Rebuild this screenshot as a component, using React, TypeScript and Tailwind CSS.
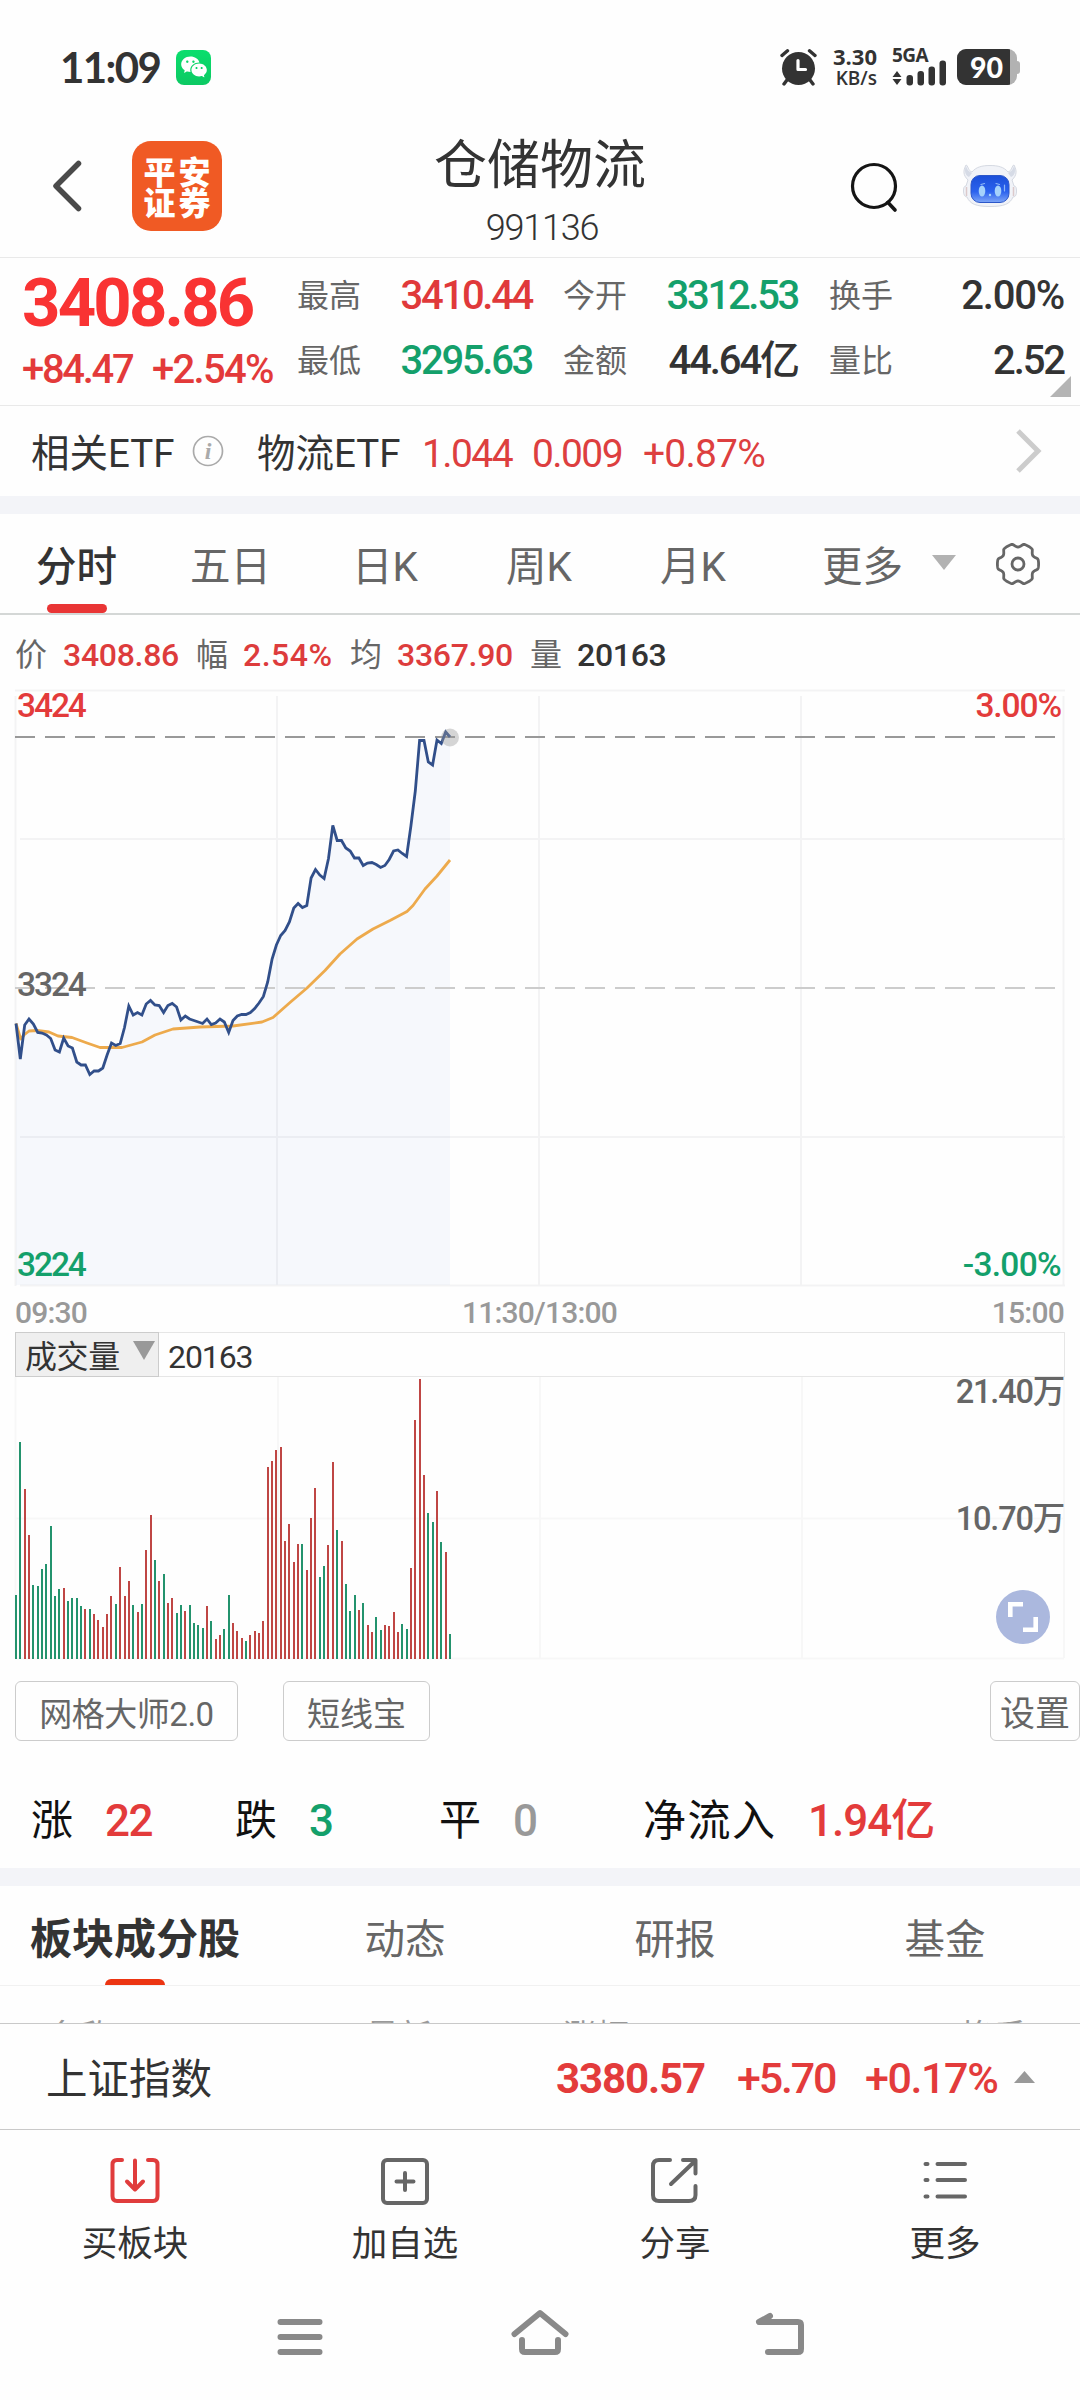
import type { ReactNode } from 'react'
import { RiWechatFill } from 'react-icons/ri'

const RED = '#e33b3b'
const GREEN = '#14a06b'

const QUOTES = [
    [
        { label: '最高', value: '3410.44', color: 'text-[#e0393a] tracking-[-2.3px]' },
        { label: '最低', value: '3295.63', color: 'text-[#14a06b] tracking-[-2.3px]' },
    ],
    [
        { label: '今开', value: '3312.53', color: 'text-[#14a06b] tracking-[-2.3px]' },
        { label: '金额', value: '44.64亿', color: 'text-[#333] tracking-[-2.1px]' },
    ],
    [
        { label: '换手', value: '2.00%', color: 'text-[#333] tracking-[-1.2px]' },
        { label: '量比', value: '2.52', color: 'text-[#333] tracking-[-2.1px]' },
    ],
]

const PERIODS = [
    { label: '分时', width: 'w-[154px]', active: true },
    { label: '五日', width: 'w-[162px]' },
    { label: '日K', width: 'w-[154px]' },
    { label: '周K', width: 'w-[154px]' },
    { label: '月K', width: 'w-[153px]' },
]

const SECTION_TABS = ['动态', '研报', '基金']

// minute by minute, pixels below the top grid line
const PRICE = [
    333.5, 369, 335, 329, 334, 342.5, 343, 345, 348.5, 360, 362, 348, 356, 358, 372, 375, 375, 384.5, 381, 381,
    378, 365, 353, 355.5, 353.5, 337.5, 316, 325, 322.5, 325, 314, 310.5, 315, 315.5, 322.5, 315.5, 313.5, 317, 330, 326,
    329, 330.5, 332, 333.5, 329, 334.5, 333, 329, 332, 342.5, 330.5, 326, 324.5, 324.5, 322.5, 318.5, 313, 306.5, 292, 269,
    255, 245.5, 240.5, 232, 218, 213.5, 217.5, 215.5, 188, 179.5, 185, 188.5, 168.5, 135.5, 150.5, 150.5, 158, 161, 168, 168,
    175.5, 173, 172.5, 174.5, 177.5, 175.5, 169.5, 161, 160, 163.5, 166.5, 136, 101, 50.5, 50.5, 72, 75, 50, 53.5, 42,
    47,
]

const AVERAGE =
    '16,333.5 20.7,349 24,345 29,341 37,340.5 49,342 58,346 72,347.5 87,353 100,357.5 122,357.5 142,352 155,345 173,339 200,337 233,336 262,332 273,327.5 290,312.5 307,298 325,280.5 340,264 357,249 373,239 390,230.5 407,221.5 413,215.5 425,199 437,186 450,170'

// positive = up minute, negative = down minute
const VOLUME = [
    -64, -217, 170, 124, -74, -73, -90, -95, -133, -63, -70, 71, -58, -61, -61, -53, 50, -50, 45, 39,
    32, 45, 63, -55, 92, 63, 78, -54, 47, -55, 109, 144, -99, 78, -85, 56, 61, -46, -54, 48,
    -54, -36, -34, -31, 53, -38, 20, 24, -30, -64, 36, 28, 21, -18, 24, 28, 26, 38, 192, 198,
    209, 212, 118, 135, 97, 115, -115, 89, 141, 171, -82, -93, 114, 197, -129, 118, -75, -48, -64, 49,
    -56, 34, 27, -42, -29, 34, 33, 47, 27, -35, -30, 91, 239, 280, 184, -146, -137, 168, -117, 107,
    -25,
]

const STEP = 4.34
const pricePoints = PRICE.map((y, i) => `${(16 + i * STEP).toFixed(1)},${y}`).join(' ')

// six flat teeth with rounded notches between them
const gearPath =
    Array.from({ length: 120 }, (_, i) => {
        const deg = i * 3
        const fromTooth = Math.abs(((deg + 30) % 60) - 30)
        const r = fromTooth <= 14 ? 20.6 : 20.6 - 3.6 * Math.sin((((fromTooth - 14) / 16) * Math.PI) / 2)
        const a = (deg * Math.PI) / 180
        return `${i ? 'L' : 'M'}${(22 + r * Math.cos(a)).toFixed(2)} ${(22 + r * Math.sin(a)).toFixed(2)}`
    }).join('') + 'Z'

function StatusBar() {
    return (
        <div className="flex h-[115px] items-center pt-[19px] pl-[60px] text-[#333]">
            <span className="w-[116px] font-[Lato] text-[42px] leading-none font-bold tracking-[-1.6px]">11:09</span>
            <div className="flex size-[35px] items-center justify-center rounded-lg bg-gradient-to-b from-[#0ade6d] to-[#0cc963] text-white">
                <RiWechatFill size={28} />
            </div>
            <svg className="ml-[569px]" width="37" height="37" viewBox="0 0 37 37" fill="none">
                <circle cx="18.5" cy="19.5" r="16.5" fill="#333" />
                <path d="M2 6.5L7.5 1.8M35 6.5L29.5 1.8" stroke="#333" strokeWidth="3.4" strokeLinecap="round" />
                <path d="M7 31L4 35M30 31L33 35" stroke="#333" strokeWidth="3.4" strokeLinecap="round" />
                <path d="M18 11.5V20.5H25.5" stroke="#fff" strokeWidth="3.2" strokeLinecap="round" strokeLinejoin="round" />
            </svg>
            <div className="ml-[12px] flex w-[48px] flex-col items-end font-['Open_Sans'] text-[22px] leading-[22px] font-bold">
                <span>3.30</span>
                <span className="text-[19px] font-semibold">KB/s</span>
            </div>
            <div className="ml-[15px] w-[56px]">
                <div className="font-['Open_Sans'] text-[19px] leading-[14px] font-bold tracking-[-0.5px]">5GA</div>
                <svg className="-mt-[2px] -ml-px block" width="57" height="26" viewBox="0 0 57 26" fill="#333">
                    <path d="M6 11L10.5 17H1.5ZM6 25L10.5 19H1.5Z" />
                    <rect x="15.5" y="15" width="6.5" height="10.5" rx="3" />
                    <rect x="26.5" y="11" width="6.5" height="14.5" rx="3" />
                    <rect x="37.5" y="6.5" width="6.5" height="19" rx="3" />
                    <rect x="48.5" y="0.5" width="6.5" height="25" rx="3" />
                </svg>
            </div>
            <div className="ml-[9px] flex items-center">
                <div className="flex h-9 w-[60px] overflow-hidden rounded-[9px] bg-[#b2b2b2]">
                    <div className="w-[53px] bg-[#333] pt-[3px] pl-[6px] text-center font-[Lato] text-[28.5px] leading-[31px] font-black text-white">90</div>
                </div>
                <div className="h-[13px] w-[3px] rounded-r-sm bg-[#b2b2b2]" />
            </div>
        </div>
    )
}

function Robot() {
    return (
        <svg width="56" height="46" viewBox="0 0 56 46" fill="none">
            <defs>
                <linearGradient id="face" x1="0" y1="0" x2="0" y2="1">
                    <stop offset="0" stopColor="#1b4fd8" />
                    <stop offset="0.6" stopColor="#2b62ee" />
                    <stop offset="1" stopColor="#7ea6f7" />
                </linearGradient>
            </defs>
            <path
                d="M4 2C1 8 1 12 6 17L4 23C2 23 1.5 25 1.5 28S2.5 34 5 34C8 41 14 43.5 28 43.5S48 41 51 34C54 34 54.5 31 54.5 28S54 23 52 23L50 17C55 12 55 8 52 2C50 2 50 8 46 9C42 4 36 2.5 28 2.5S14 4 10 9C6 8 6 2 4 2Z"
                fill="#f1f3f8"
                stroke="#d5d9e2"
                strokeWidth="1"
            />
            <path d="M4 3C2 8 3 12 7 14L10 10C6 8 5 6 4 3ZM52 3C54 8 53 12 49 14L46 10C50 8 51 6 52 3Z" fill="#d6dbe6" />
            <path d="M4.5 24V33M51.5 24V33" stroke="#dcc9cb" strokeWidth="1.5" />
            <rect x="9" y="12.5" width="38" height="27" rx="9" fill="url(#face)" stroke="#2c57c9" strokeWidth="1" />
            <ellipse cx="20" cy="28" rx="3.3" ry="5.5" fill="#a5d2fb" />
            <ellipse cx="36" cy="28" rx="3.3" ry="5.5" fill="#a5d2fb" />
            <path d="M19 21.5L22.5 20.5M34 20.5L37.5 21.5M42.5 22V28" stroke="#8cb6f7" strokeWidth="1.2" strokeLinecap="round" />
            <circle cx="28" cy="32" r="1.2" fill="#a5d2fb" />
        </svg>
    )
}

function Header() {
    return (
        <header className="flex h-[143px] items-center border-b border-[#e9e9e9]">
            <div className="flex w-[270px] items-center pl-[50px]">
                <svg width="34" height="56" viewBox="0 0 34 56" fill="none">
                    <path d="M28.5 5.5L6 28L28.5 50.5" stroke="#4a4a4a" strokeWidth="5.5" strokeLinecap="round" strokeLinejoin="round" />
                </svg>
                <div className="ml-[48px] flex size-[90px] flex-col items-center justify-center rounded-[19px] bg-[#f05a24] pb-px pl-[3px] font-['Noto_Sans_CJK_SC'] text-[32px] leading-[31px] font-black tracking-[3px] text-white">
                    <span>平安</span>
                    <span>证券</span>
                </div>
            </div>
            <div className="flex flex-1 flex-col items-center pt-[14px] text-[#333]">
                <h1 className="text-[53px] leading-[66px]">仓储物流</h1>
                <span className="mt-[3px] pl-[4px] text-[36px] leading-[52px] font-light tracking-[-1.2px]">991136</span>
            </div>
            <div className="flex w-[270px] items-center gap-[62px] pl-[40px]">
                <svg width="50" height="54" viewBox="0 0 50 54" fill="none" stroke="#151515" strokeLinecap="round">
                    <circle cx="24" cy="27" r="21.5" strokeWidth="3.2" />
                    <path d="M38 43.5L45 51" strokeWidth="3.6" />
                </svg>
                <Robot />
            </div>
        </header>
    )
}

function QuotePanel() {
    return (
        <section className="relative flex h-[148px] border-b border-[#e9e9e9] pr-4">
            <div className="w-[297px] pl-[22px]">
                <div className="mt-[11px] text-[67px] leading-[68px] font-bold tracking-[-2.8px] text-[#f93333]">3408.86</div>
                <div className="mt-[13px] flex text-[40px] leading-[40px] font-medium tracking-[-2px] text-[#e33a3a]">
                    <span className="w-[130px] tracking-[-2.3px]">+84.47</span>
                    <span className="tracking-[-1.7px]">+2.54%</span>
                </div>
            </div>
            <div className="flex flex-1 gap-[31px] pt-[5px]">
                {QUOTES.map(col => (
                    <div key={col[0].label} className="flex-1">
                        {col.map(item => (
                            <div key={item.label} className="flex h-[65px] items-center justify-between">
                                <span className="pt-px text-[32px] leading-none text-[#666]">{item.label}</span>
                                <span className={`text-[40px] leading-none font-medium ${item.color}`}>{item.value}</span>
                            </div>
                        ))}
                    </div>
                ))}
            </div>
            <svg className="absolute right-[9px] bottom-[8px]" width="21" height="21" viewBox="0 0 21 21">
                <path d="M21 0V21H0Z" fill="#b4b4b4" />
            </svg>
        </section>
    )
}

function EtfRow() {
    return (
        <section className="flex h-[90px] items-center pl-[31px] leading-none">
            <span className="w-[161px] pt-[6px] text-[38.5px] text-[#333]">相关ETF</span>
            <svg width="32" height="32" viewBox="0 0 32 32" fill="none">
                <circle cx="16" cy="16" r="14.5" stroke="#aaa" strokeWidth="1.7" />
                <text x="16" y="24" textAnchor="middle" fontFamily="Liberation Serif" fontStyle="italic" fontWeight="bold" fontSize="24" fill="#aaa">
                    i
                </text>
            </svg>
            <span className="ml-[33px] w-[165px] pt-[6px] text-[38.5px] text-[#333]">物流ETF</span>
            <div className="flex pt-[6px] text-[39px] tracking-[-1.6px] text-[#dd3f3f]">
                <span className="w-[110px]">1.044</span>
                <span className="w-[111px]">0.009</span>
                <span className="tracking-[-0.8px]">+0.87%</span>
            </div>
            <svg className="mr-[37px] ml-auto" width="28" height="46" viewBox="0 0 28 46" fill="none">
                <path d="M3 3L23 23L3 43" stroke="#ccc" strokeWidth="5" />
            </svg>
        </section>
    )
}

function PeriodTabs() {
    return (
        <nav className="flex h-[101px] border-b-2 border-[#d4d7d6] pl-[36px] text-[40.5px] leading-none text-[#666]">
            {PERIODS.map(tab => (
                <div key={tab.label} className={tab.width}>
                    <div className="inline-flex h-[99px] flex-col items-center justify-between pt-[33px]">
                        <span className={tab.active ? 'font-medium text-[#333]' : ''}>{tab.label}</span>
                        {tab.active && <span className="h-[9px] w-[60px] rounded-full bg-[#e93535]" />}
                    </div>
                </div>
            ))}
            <span className="w-[91px] pt-[33px] pl-[9px]">更多</span>
            <svg className="mt-[41px] ml-[28px]" width="24" height="15" viewBox="0 0 24 15">
                <path d="M0 0H24L12 15Z" fill="#b2b2b2" />
            </svg>
            <svg className="mt-[28px] ml-[40px]" width="44" height="44" viewBox="0 0 44 44" fill="none" stroke="#666" strokeWidth="2.8" strokeLinejoin="round">
                <path d={gearPath} />
                <circle cx="22" cy="22" r="6" />
            </svg>
        </nav>
    )
}

function Legend() {
    return (
        <div className="flex h-[75px] items-center pt-[4px] pl-[15px] text-[32px] leading-none font-medium tracking-[-0.3px] text-[#dd3c3c]">
            <span className="w-[48px] font-normal text-[#666]">价</span>
            <span className="w-[133px]">3408.86</span>
            <span className="w-[47px] font-normal text-[#666]">幅</span>
            <span className="w-[107px] tracking-[0.5px]">2.54%</span>
            <span className="w-[47px] font-normal text-[#666]">均</span>
            <span className="w-[133px]">3367.90</span>
            <span className="w-[47px] font-normal text-[#666]">量</span>
            <span className="text-[#333]">20163</span>
        </div>
    )
}

function PriceChart() {
    return (
        <svg className="block overflow-visible" width="1080" height="600" viewBox="0 0 1080 600" fill="none">
            <g stroke="#f3f3f4" strokeWidth="2">
                <path d="M15 .5H1065M20 149H1065M20 447H1065M20 595.5H1065" />
                <path d="M15.5 6V596M277 6V596M539 6V596M801 6V596M1063.5 6V596" />
            </g>
            <polygon points={`16,595 ${pricePoints} 450,595`} fill="#3c6ec8" fillOpacity="0.045" />
            <path d="M15 47H1055" stroke="#999" strokeWidth="2" strokeDasharray="20 10" />
            <path d="M15 298H1055" stroke="#ccc" strokeWidth="2" strokeDasharray="20 10" />
            <polyline points={AVERAGE} stroke="#edaa4c" strokeWidth="2.8" strokeLinejoin="round" />
            <polyline points={pricePoints} stroke="#314f8a" strokeWidth="2.8" />
            <circle cx="450" cy="47.5" r="9" fill="#999" fillOpacity="0.4" />
            <g fontSize="33.5" fontWeight="500" letterSpacing="-2.1">
                <text x="17" y="27" fill={RED}>3424</text>
                <text x="17" y="306" fill="#666">3324</text>
                <text x="17" y="586" fill={GREEN}>3224</text>
                <text x="1061" y="27" textAnchor="end" fill={RED} letterSpacing="-1.1">3.00%</text>
                <text x="1061" y="586" textAnchor="end" fill={GREEN} letterSpacing="-0.7">-3.00%</text>
            </g>
        </svg>
    )
}

function TimeAxis() {
    return (
        <div className="flex h-[42px] items-center justify-between pt-[3px] pr-4 pl-[15px] text-[30px] leading-none font-medium tracking-[-0.8px] text-[#999]">
            <span>09:30</span>
            <span>11:30/13:00</span>
            <span>15:00</span>
        </div>
    )
}

function VolumeChart() {
    return (
        <div className="relative">
            <div className="mr-[15px] ml-[15px] flex h-[45px] items-center border border-[#e6e6e6] text-[32px] leading-none text-[#333]">
                <div className="-m-px flex h-[45px] w-[144px] items-center justify-between border border-[#ccc] bg-[#efefef] pr-[3px] pl-[9px]">
                    <span className="pt-[4px] tracking-[-0.4px]">成交量</span>
                    <svg className="-mt-2" width="22" height="19" viewBox="0 0 22 19">
                        <path d="M0 0H22L11 19Z" fill="#999" />
                    </svg>
                </div>
                <span className="pt-[4px] pl-[10px] tracking-[-1.1px]">20163</span>
            </div>
            <svg className="block overflow-visible" width="1080" height="283" viewBox="0 0 1080 283" fill="none">
                <path d="M15.5 0V281M278 0V281M540 0V281M802 0V281M1064 0V281M15 141.5H1064M15 281.5H1064" stroke="#f7f7f7" strokeWidth="2" />
                {VOLUME.map((v, i) => (
                    <rect
                        key={i}
                        x={Math.round(15 + i * STEP)}
                        y={282 - Math.abs(v)}
                        width="2"
                        height={Math.abs(v)}
                        fill={v > 0 ? '#bf4644' : '#23936d'}
                    />
                ))}
                <g fontSize="32.5" fontWeight="500" letterSpacing="-1.2" fill="#666" textAnchor="end">
                    <text x="1064" y="26">21.40万</text>
                    <text x="1064" y="153">10.70万</text>
                </g>
            </svg>
            <button className="absolute right-[30px] bottom-[16px] size-[54px] rounded-full bg-[#abb8de]">
                <svg width="54" height="54" viewBox="0 0 54 54" fill="none" stroke="#fff" strokeWidth="4.6">
                    <path d="M27 14.3H14.3V27M27 39.7H39.7V27" />
                </svg>
            </button>
        </div>
    )
}

function ToolButton({ className, children }: { className: string; children: ReactNode }) {
    return <button className={`h-[60px] rounded-md border border-[#ccc] pt-[6px] leading-none text-[#666] ${className}`}>{children}</button>
}

function Breadth() {
    return (
        <section className="flex h-[127px] items-center pt-[33px] pl-[31px] text-[42px] leading-none text-[#111]">
            <span className="w-[74px]">涨</span>
            <span className="w-[130px] text-[44px] font-medium tracking-[-1.5px] text-[#e33b3b]">22</span>
            <span className="w-[74px]">跌</span>
            <span className="w-[130px] text-[44px] font-medium text-[#14a06b]">3</span>
            <span className="w-[74px]">平</span>
            <span className="w-[130px] text-[44px] font-medium text-[#999]">0</span>
            <span className="w-[165px] text-[43px] tracking-[1.5px]">净流入</span>
            <span className="text-[44px] font-medium tracking-[-1px] text-[#e33b3b]">1.94亿</span>
        </section>
    )
}

function BottomAction({ label, children }: { label: string; children: ReactNode }) {
    return (
        <div className="flex flex-1 flex-col items-center pt-[24px] text-[35.5px] leading-none text-[#333]">
            <svg width="54" height="54" viewBox="0 0 54 54" fill="none" stroke="#666" strokeWidth="4" strokeLinecap="round" strokeLinejoin="round">
                {children}
            </svg>
            <span className="mt-[19px]">{label}</span>
        </div>
    )
}

export default function App() {
    return (
        <div className="flex h-[2400px] w-[1080px] flex-col overflow-hidden bg-[#fefefe] font-['Roboto','Noto_Sans_CJK_SC',sans-serif]">
            <StatusBar />
            <Header />
            <QuotePanel />
            <EtfRow />
            <div className="h-[18px] bg-[#f3f4f8]" />
            <PeriodTabs />
            <Legend />
            <PriceChart />
            <TimeAxis />
            <VolumeChart />

            {/* Tools */}
            <div className="flex h-[81px] items-end pl-[15px]">
                <ToolButton className="w-[223px] text-[33px] tracking-[-0.5px]">网格大师2.0</ToolButton>
                <ToolButton className="ml-[45px] w-[147px] text-[33px]">短线宝</ToolButton>
                <ToolButton className="ml-auto w-[90px] text-[35px]">设置</ToolButton>
            </div>

            <Breadth />
            <div className="h-[18px] bg-[#f3f4f8]" />

            {/* Section tabs */}
            <nav className="flex h-[100px] border-b border-[#f1f1f1] text-[40.5px] leading-none text-[#666]">
                <div className="flex w-[270px] flex-col items-center justify-between pt-[33px] text-[42px] font-bold text-[#333]">
                    <span>板块成分股</span>
                    <span className="h-[6px] w-[60px] rounded-t-md bg-[#ec3512]" />
                </div>
                {SECTION_TABS.map(tab => (
                    <span key={tab} className="w-[270px] pt-[34px] text-center">{tab}</span>
                ))}
            </nav>

            {/* Table head, cut off by the index bar */}
            <div className="flex h-[37px] overflow-hidden pt-[31px] pl-[48px] text-[33px] leading-[40px] text-[#999]">
                <span className="w-[318px]">名称</span>
                <span className="w-[197px]">最新</span>
                <span className="w-[398px]">涨幅</span>
                <span>换手</span>
            </div>

            <div className="flex h-[107px] items-center border-y border-[#c9c9c9] pl-[46px] leading-none font-medium text-[#e33b3b]">
                <span className="w-[510px] pt-[7px] text-[41.5px] font-normal text-[#333]">上证指数</span>
                <span className="w-[181px] pt-[5px] text-[42px] font-bold tracking-[-1.1px]">3380.57</span>
                <span className="w-[128px] pt-[4px] text-[43px] tracking-[-2.2px]">+5.70</span>
                <span className="w-[149px] pt-[4px] text-[43px] tracking-[-1.4px]">+0.17%</span>
                <svg width="21" height="12" viewBox="0 0 21 12">
                    <path d="M10.5 0L21 12H0Z" fill="#999" />
                </svg>
            </div>

            <div className="flex h-[150px]">
                <BottomAction label="买板块">
                    <g stroke="#e03c3c">
                        <path d="M14 6H9Q4.5 6 4.5 10.5V42Q4.5 47 9 47H45Q49.5 47 49.5 42V10.5Q49.5 6 45 6H40" />
                        <path d="M27 6.5V35M19 27.5L27 35.5L35 27.5" />
                    </g>
                </BottomAction>
                <BottomAction label="加自选">
                    <rect x="5" y="6" width="44" height="43" rx="4" />
                    <path d="M27 19V36M18.5 27.5H35.5" />
                </BottomAction>
                <BottomAction label="分享">
                    <path d="M22 6H11Q5 6 5 12V41Q5 47 11 47H41Q47.5 47 47.5 41V32M35 6H47.5V19.5M46.5 7.5L23 30" />
                </BottomAction>
                <BottomAction label="更多">
                    <path d="M7.5 10H9.5M19.5 10H47M7.5 26H9.5M19.5 26H47M7.5 42.5H9.5M19.5 42.5H47" />
                </BottomAction>
            </div>

            {/* System navigation */}
            <div className="flex h-[110px] items-center justify-center gap-[180px]">
                <svg width="60" height="60" viewBox="0 0 60 60" stroke="#898989" strokeWidth="6" strokeLinecap="round">
                    <path d="M10.500 17H49.500M10.500 32H49.500M10.500 47H49.500" />
                </svg>
                <svg width="60" height="60" viewBox="0 0 60 60" fill="none" stroke="#898989" strokeWidth="6" strokeLinecap="round" strokeLinejoin="round">
                    <path d="M4.5 29L30 8L55.5 29M12 35V44Q12 47 15 47H45Q48 47 48 44V35" />
                </svg>
                <svg width="60" height="60" viewBox="0 0 60 60" fill="none" stroke="#898989" strokeWidth="6" strokeLinecap="round" strokeLinejoin="round">
                    <path d="M20 11L9 17H48Q51 17 51 20V44Q51 47 48 47H18" />
                </svg>
            </div>
        </div>
    )
}
